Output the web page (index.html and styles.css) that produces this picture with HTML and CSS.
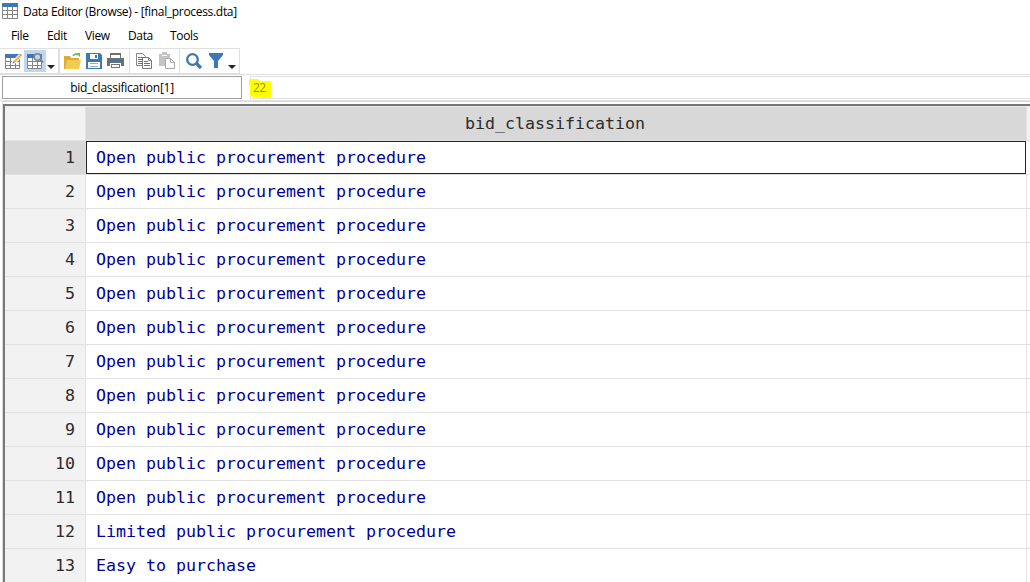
FILE: index.html
```html
<!DOCTYPE html>
<html lang="en">
<head>
<meta charset="utf-8">
<title>Data Editor (Browse) - [final_process.dta]</title>
<link rel="stylesheet" href="styles.css">
</head>
<body>
<div class="window">
  <header class="titlebar">
    <svg class="app-icon" width="16" height="16" viewBox="0 0 16 16"><path fill="#fff" d="M0 0h16v16H0z"/><path fill="#3b78b5" d="M0 0h16v4H0z"/><path fill="none" stroke="#858585" d="M.5 4v11.500h15V4M5.500 4v12M10.500 4v12M0 7.500h16M0 11.500h16"/></svg>
    <span class="title">Data Editor (Browse) - [final_process.dta]</span>
  </header>
  <nav class="menu"><span class="m-file">File</span><span class="m-edit">Edit</span><span class="m-view">View</span><span class="m-data">Data</span><span class="m-tools">Tools</span></nav>
  <div class="toolbar-row">
    <div class="toolbar">
      <div class="group modes">
        <svg width="17" height="18" viewBox="0 0 17 18"><path fill="#fff" d="M0 2h15v15H0z"/><path fill="#3b78b5" d="M0 2h15v4H0z"/><path fill="none" stroke="#858585" d="M.5 6v10.500h14V6M5.500 6v11M10.500 6v11M0 9.500h15M0 13.500h15"/><path stroke="#fff" stroke-width="4" d="m8 11 8-8"/><path stroke="#f5b55d" stroke-width="2.400" d="m9 10 6-6"/><path fill="#e98b62" d="m14 3 1.500-1.500 1.500 1.500-1.500 1.500z"/><path fill="#777" d="m7.500 11.500.8-2.300 1.500 1.500z"/></svg>
        <span class="active"><svg width="18" height="18" viewBox="0 0 18 18"><path fill="#fff" d="M0 2h15v15H0z"/><path fill="#3b78b5" d="M0 2h15v4H0z"/><path fill="none" stroke="#858585" d="M.5 6v10.500h14V6M5.500 6v11M10.500 6v11M0 9.500h15M0 13.500h15"/><circle cx="10.500" cy="5" r="3.300" fill="#c2d6f2" stroke="#758294" stroke-width="1.500"/><path stroke="#758294" stroke-width="2" d="m13 7.500 3 3"/></svg></span>
        <i class="arrow"></i>
      </div>
      <div class="group files">
        <svg width="17" height="18" viewBox="0 0 17 18"><path fill="#dcae32" d="M0 4h6l1 2h8v11H0z"/><path fill="#f1cb54" d="M1 17 3 8h14l-2 9z"/><path fill="none" stroke="#7caf68" stroke-width="1.500" d="M9 4c1-2 3-2.500 5-1"/><path fill="#7caf68" d="M12 1h4v4z"/></svg>
        <svg width="16" height="18" viewBox="0 0 16 18"><path fill="#3b78b5" d="M0 1h14l2 2v14H0z"/><path fill="#fff" d="M4 2h8v5H4zM2 10h12v6H2z"/><path fill="#3b78b5" d="M9 3h2v3H9z"/><path stroke="#9babb9" d="M4 11.500h8M4 14.500h8"/></svg>
        <svg width="17" height="18" viewBox="0 0 17 18"><path fill="#707070" d="M3 1h11v5H3zM0 6h17v8H0z"/><path fill="#fff" d="M4 3h9v3H4zM3 11h11v6H3z"/><path fill="#3b78b5" d="M2 7h13v3H2z"/><path fill="#777" d="M4 12h9v4H4z"/><path fill="#fff" d="M5 13h7v2H5z"/></svg>
      </div>
      <div class="group clipboard">
        <svg width="17" height="18" viewBox="0 0 17 18"><path fill="#fff" stroke="#858585" d="M.5 1.500h6l3 3v9h-9z"/><path stroke="#3b78b5" d="M2 5.500h5M2 7.500h5M2 9.500h5M2 11.500h5"/><path fill="#fff" stroke="#777" d="M6.500 5.500h6l3 3v8h-9z"/><path fill="none" stroke="#777" d="M12.500 5.500v3h3"/><path stroke="#3b78b5" d="M8 9.500h4M8 11.500h6M8 13.500h6"/></svg>
        <svg width="17" height="18" viewBox="0 0 17 18"><path fill="#c4c4c4" d="M0 2h3V0h5v2h3v12H0z"/><path fill="#fff" d="M3 3h5v1H3z"/><path fill="#fff" stroke="#aaa" d="M6.500 6.500h5l4 4v6h-9z"/><path fill="none" stroke="#aaa" d="M11.500 6.500v4h4"/></svg>
      </div>
      <div class="group search">
        <svg width="17" height="18" viewBox="0 0 17 18"><circle cx="6.500" cy="7.500" r="5.300" fill="none" stroke="#3b78b5" stroke-width="2.300"/><path stroke="#3b78b5" stroke-width="3.200" d="m10 11 5 5"/></svg>
        <svg width="14" height="18" viewBox="0 0 14 18"><path fill="#3b78b5" d="M0 1h14v2L9 9v7H5V9L0 3z"/></svg>
        <i class="arrow"></i>
      </div>
    </div>
  </div>
  <div class="fieldbar"><div class="varname">bid_classification[1]</div><div class="value"><svg class="marker" width="24" height="20" viewBox="0 0 24 20"><path fill="#ff0" d="M0 0h9l1 2h12v17H12l-1-1H3l-2-2V8L0 6z"/></svg><span>22</span></div></div>
  <div class="frame">
  <main class="grid">
    <div class="row head"><div class="num"></div><div class="cell">bid_classification</div></div>
    <div class="row selected"><div class="num">1</div><div class="cell">Open public procurement procedure</div></div>
    <div class="row"><div class="num">2</div><div class="cell">Open public procurement procedure</div></div>
    <div class="row"><div class="num">3</div><div class="cell">Open public procurement procedure</div></div>
    <div class="row"><div class="num">4</div><div class="cell">Open public procurement procedure</div></div>
    <div class="row"><div class="num">5</div><div class="cell">Open public procurement procedure</div></div>
    <div class="row"><div class="num">6</div><div class="cell">Open public procurement procedure</div></div>
    <div class="row"><div class="num">7</div><div class="cell">Open public procurement procedure</div></div>
    <div class="row"><div class="num">8</div><div class="cell">Open public procurement procedure</div></div>
    <div class="row"><div class="num">9</div><div class="cell">Open public procurement procedure</div></div>
    <div class="row"><div class="num">10</div><div class="cell">Open public procurement procedure</div></div>
    <div class="row"><div class="num">11</div><div class="cell">Open public procurement procedure</div></div>
    <div class="row"><div class="num">12</div><div class="cell">Limited public procurement procedure</div></div>
    <div class="row"><div class="num">13</div><div class="cell">Easy to purchase</div></div>
  </main>
  </div>
</div>
</body>
</html>
```

FILE: styles.css
```css
* { box-sizing: border-box; }
body { margin: 0; background: #fff; color: #000; font: 12px/16px "Open Sans", "Noto Sans", sans-serif; }
svg { display: block; flex: none; }
.window { display: flex; flex-direction: column; width: 1030px; height: 582px; overflow: hidden; }
.titlebar { display: flex; flex: none; height: 24px; padding: 4px 0 0 2px; gap: 5px; white-space: nowrap; }
.app-icon { margin-top: -1px; }
.title { letter-spacing: -0.31px; }
.menu { display: grid; flex: none; grid-template-columns: 36px 38px 43px 42px 60px; height: 24px; padding: 4px 0 0 11px; letter-spacing: -0.35px; }
.toolbar-row { flex: none; height: 27px; border-bottom: 1px solid #dedede; }
.toolbar { display: flex; width: 240px; height: 26px; border: 1px solid #e0e0e0; border-left: 0; }
.group { display: flex; align-items: center; height: 24px; border-right: 1px solid #dedede; }
.modes { width: 60px; padding-left: 5px; border-right-width: 2px; }
.active { display: flex; align-items: center; width: 22px; height: 22px; margin-left: 2px; padding-left: 3px; background: #c2d6f2; }
.arrow { width: 0; height: 0; margin: 11px 0 0 1px; border: 4px solid transparent; border-top-color: #222; border-bottom: 0; }
.files { width: 70px; padding-left: 4px; gap: 5px; }
.clipboard { width: 50px; padding-left: 6px; gap: 6px; }
.search { width: 59px; padding-left: 6px; gap: 6px; border: 0; }
.search .arrow { margin-left: -1px; }
.fieldbar { display: flex; flex: none; height: 26px; padding: 1px 0 1px 2px; border-bottom: 1px solid #e0e0e0; }
.varname { width: 240px; height: 23px; border: 1px solid #a0a0a0; text-align: center; line-height: 21px; letter-spacing: -0.25px; }
.value { position: relative; width: 780px; height: 23px; margin-left: 8px; border: solid #e0e0e0; border-width: 1px 0 1px 1px; line-height: 21px; }
.marker { position: absolute; left: -2px; top: 2px; }
.value span { position: relative; padding-left: 2px; color: #929200; letter-spacing: -0.5px; }
.frame { flex: none; margin-left: 2px; padding-top: 2px; border-top: 1px solid #dcdcdc; border-left: 1px solid #dcdcdc; }
.grid { border-top: 2px solid #777; border-left: 2px solid #777; height: 478px; overflow: hidden; font: 16.61px/34px "DejaVu Sans Mono", monospace; }
.row { display: grid; grid-template-columns: 81px 941px 1fr; grid-template-rows: 33px; height: 34px; border-bottom: 1px solid #e2e2e2; }
.num { padding-right: 10px; border-right: 1px solid #e2e2e2; background: #f2f2f2; color: #2b2b2b; text-align: right; }
.cell { padding-left: 10px; border-right: 1px solid #e2e2e2; color: #00009b; white-space: pre; }
.head { height: 35px; border-top: 1px solid #e9e9e9; background: #f2f2f2; line-height: 33px; }
.head .cell { padding: 0 2px 0 0; background: #d8d8d8; color: #2b2b2b; text-align: center; }
.selected .num { background: #d8d8d8; }
.selected .cell { width: 940px; height: 33px; padding-left: 9px; border: 1px solid #222; line-height: 32px; }
```
